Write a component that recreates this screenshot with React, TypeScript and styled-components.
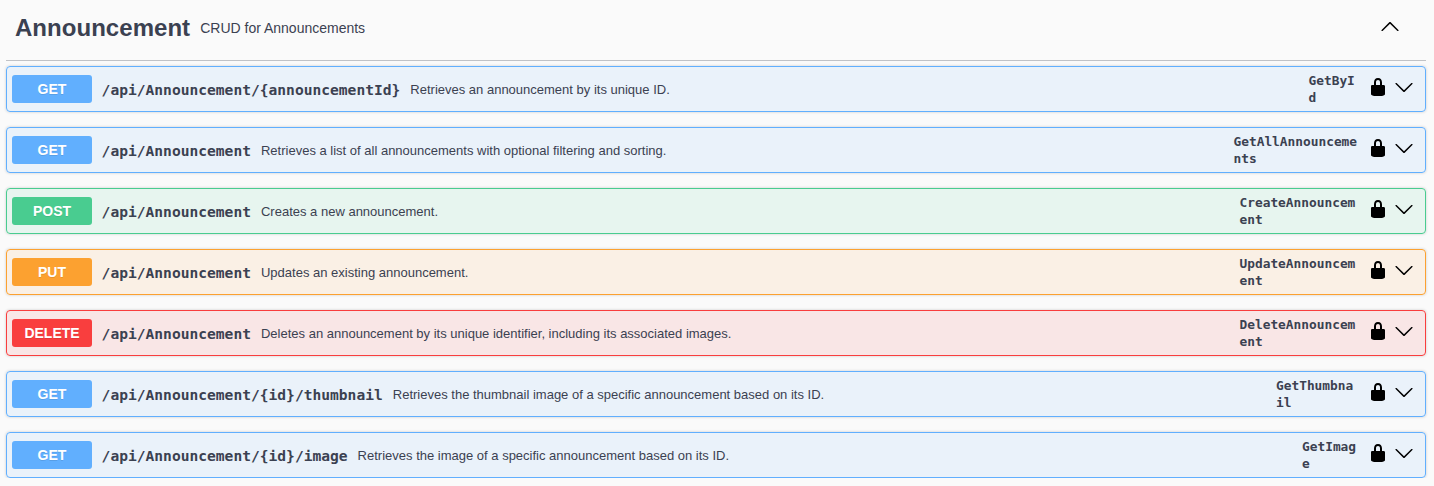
import React from 'react';
import styled, { createGlobalStyle } from 'styled-components';

const GlobalStyle = createGlobalStyle`
  * { box-sizing: border-box; }
  body {
    margin: 0;
    background: #fafafa;
    color: #3b4151;
    font-family: Arial, 'Liberation Sans', sans-serif;
    overflow: hidden;
  }
`;

const Section = styled.section`
  display: flex;
  flex-direction: column;
  padding: 0 8px 0 6px;
`;

const TagHeader = styled.header`
  display: flex;
  align-items: center;
  height: 61px;
  padding: 0 26px 5px 9px;
  margin-bottom: 5px;
  border-bottom: 1px solid rgba(59, 65, 81, 0.3);
`;

const TagName = styled.h3`
  margin: 0;
  font-size: 24px;
  line-height: 28px;
  letter-spacing: 0.04px;
`;

const TagDescription = styled.span`
  flex: 1;
  padding-left: 10px;
  font-size: 14px;
  line-height: 20px;
`;

const Icon = styled.svg`
  display: block;
  flex: none;
  width: 20px;
  height: 20px;
  fill: #000;
`;

const TagToggle = styled.div`
  padding-bottom: 3px;
`;

const Operations = styled.div`
  display: flex;
  flex-direction: column;
  gap: 15px;
`;

const Operation = styled.div<{ $rgb: string }>`
  display: flex;
  align-items: center;
  height: 46px;
  padding: 0 11px 0 5px;
  border: 1px solid rgb(${(p) => p.$rgb});
  border-radius: 4px;
  background: rgba(${(p) => p.$rgb}, 0.1);
  box-shadow: 0 0 3px rgba(0, 0, 0, 0.19);
`;

const Method = styled.span<{ $rgb: string }>`
  flex: none;
  width: 80px;
  height: 28px;
  border-radius: 3px;
  background: rgb(${(p) => p.$rgb});
  color: #fff;
  font-size: 14px;
  font-weight: 700;
  line-height: 28px;
  text-align: center;
  text-shadow: 0 1px 0 rgba(0, 0, 0, 0.1);
`;

const Path = styled.span`
  flex: none;
  padding: 2px 10px 0 9.6px;
  font: 700 14.6px/20px 'DejaVu Sans Mono', monospace;
`;

const Summary = styled.span`
  flex: 1;
  padding-top: 2px;
  font-size: 13px;
  line-height: 18px;
`;

const OperationId = styled.span<{ $width: number }>`
  flex: none;
  width: ${(p) => p.$width}px;
  font: 700 12.83px/17px 'DejaVu Sans Mono', monospace;
  white-space: pre-line;
`;

const Actions = styled.div`
  display: flex;
  gap: 6px;
  padding-bottom: 4px;
`;

const LOCK =
  'M15.8 8H14V5.6C14 2.703 12.665 1 10 1 7.334 1 6 2.703 6 5.6V8H4c-.553 0-1 .646-1 1.199V17c0 .549.428 1.139.951 1.307l1.197.387C5.672 18.861 6.55 19 7.1 19h5.8c.549 0 1.428-.139 1.951-.307l1.196-.387c.524-.167.953-.757.953-1.306V9.199C17 8.646 16.352 8 15.8 8zM12 8H8V5.199C8 3.754 8.797 3 10 3c1.203 0 2 .754 2 2.199V8z';
const ARROW_DOWN =
  'M17.418 6.109c.272-.268.709-.268.979 0s.271.701 0 .969l-7.908 7.83c-.27.268-.707.268-.979 0l-7.908-7.83c-.27-.268-.27-.701 0-.969.271-.268.709-.268.979 0L10 13.25l7.418-7.141z';
const ARROW_UP =
  'M17.418 14.908c.272.268.709.268.979 0s.271-.701 0-.969l-7.908-7.83c-.27-.268-.707-.268-.979 0l-7.908 7.83c-.27.268-.27.701 0 .969.271.268.709.268.979 0L10 7.767l7.418 7.141z';

const METHOD_RGB = {
  GET: '97, 175, 254',
  POST: '73, 204, 144',
  PUT: '252, 161, 48',
  DELETE: '249, 62, 62',
};

type Endpoint = {
  method: keyof typeof METHOD_RGB;
  path: string;
  summary: string;
  id: string;
  idWidth: number;
};

const ENDPOINTS: Endpoint[] = [
  { method: 'GET', path: '/api/Announcement/{announcementId}', summary: 'Retrieves an announcement by its unique ID.', id: 'GetByI\nd', idWidth: 59.5 },
  { method: 'GET', path: '/api/Announcement', summary: 'Retrieves a list of all announcements with optional filtering and sorting.', id: 'GetAllAnnounceme\nnts', idWidth: 134.5 },
  { method: 'POST', path: '/api/Announcement', summary: 'Creates a new announcement.', id: 'CreateAnnouncem\nent', idWidth: 128.5 },
  { method: 'PUT', path: '/api/Announcement', summary: 'Updates an existing announcement.', id: 'UpdateAnnouncem\nent', idWidth: 128.5 },
  { method: 'DELETE', path: '/api/Announcement', summary: 'Deletes an announcement by its unique identifier, including its associated images.', id: 'DeleteAnnouncem\nent', idWidth: 128.5 },
  { method: 'GET', path: '/api/Announcement/{id}/thumbnail', summary: 'Retrieves the thumbnail image of a specific announcement based on its ID.', id: 'GetThumbna\nil', idWidth: 92 },
  { method: 'GET', path: '/api/Announcement/{id}/image', summary: 'Retrieves the image of a specific announcement based on its ID.', id: 'GetImag\ne', idWidth: 66 },
];

export default function App() {
  return (
    <>
      <GlobalStyle />
      <Section>
        <TagHeader>
          <TagName>Announcement</TagName>
          <TagDescription>CRUD for Announcements</TagDescription>
          <TagToggle>
            <Icon viewBox="0 0 20 20"><path d={ARROW_UP} /></Icon>
          </TagToggle>
        </TagHeader>
        <Operations>
          {ENDPOINTS.map((e) => (
            <Operation key={e.id} $rgb={METHOD_RGB[e.method]}>
              <Method $rgb={METHOD_RGB[e.method]}>{e.method}</Method>
              <Path>{e.path}</Path>
              <Summary>{e.summary}</Summary>
              <OperationId $width={e.idWidth}>{e.id}</OperationId>
              <Actions>
                <Icon viewBox="0 0 20 20"><path d={LOCK} /></Icon>
                <Icon viewBox="0 0 20 20"><path d={ARROW_DOWN} /></Icon>
              </Actions>
            </Operation>
          ))}
        </Operations>
      </Section>
    </>
  );
}
